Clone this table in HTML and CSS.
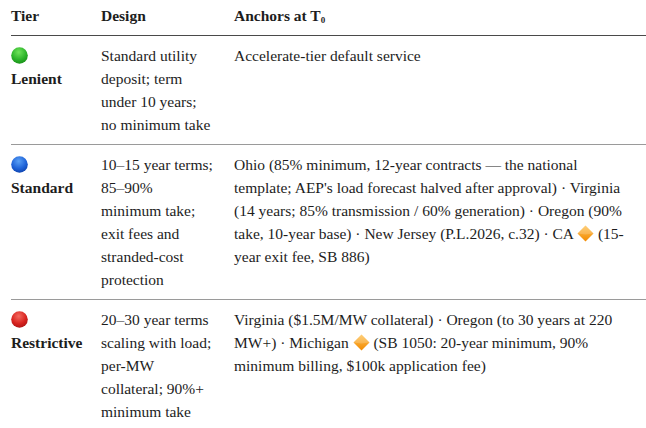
FILE: index.html
```html
<!DOCTYPE html>
<html lang="en">
<head>
<meta charset="utf-8">
<title>Tiers</title>
<link rel="stylesheet" href="styles.css">
</head>
<body>
<svg class="defs" width="0" height="0" aria-hidden="true">
  <defs>
    <radialGradient id="gGreen" cx="0.45" cy="0.3" r="0.75">
      <stop offset="0" stop-color="#6fe35a"/>
      <stop offset="0.6" stop-color="#2cb42a"/>
      <stop offset="1" stop-color="#178a17"/>
    </radialGradient>
    <radialGradient id="gBlue" cx="0.45" cy="0.3" r="0.75">
      <stop offset="0" stop-color="#5aa0f5"/>
      <stop offset="0.6" stop-color="#1f63d8"/>
      <stop offset="1" stop-color="#0c3fa8"/>
    </radialGradient>
    <radialGradient id="gRed" cx="0.45" cy="0.3" r="0.75">
      <stop offset="0" stop-color="#f46a60"/>
      <stop offset="0.6" stop-color="#d8231f"/>
      <stop offset="1" stop-color="#a81414"/>
    </radialGradient>
    <linearGradient id="gOrange" x1="0" y1="0" x2="0" y2="1">
      <stop offset="0" stop-color="#ffc45a"/>
      <stop offset="1" stop-color="#f28a00"/>
    </linearGradient>
  </defs>
</svg>
<table class="tiers">
  <colgroup>
    <col class="w1">
    <col class="w2">
    <col class="w3">
  </colgroup>
  <thead>
    <tr>
      <th class="c1">Tier</th>
      <th class="c2">Design</th>
      <th class="c3">Anchors at T<sub>0</sub></th>
    </tr>
  </thead>
  <tbody>
    <tr>
      <td class="c1">
        <svg class="dot" viewBox="0 0 17 17"><circle cx="8.5" cy="8.5" r="8.3" fill="url(#gGreen)"/></svg><br>
        <strong>Lenient</strong>
      </td>
      <td class="c2">Standard utility deposit; term under 10 years; no minimum take</td>
      <td class="c3">Accelerate-tier default service</td>
    </tr>
    <tr>
      <td class="c1">
        <svg class="dot" viewBox="0 0 17 17"><circle cx="8.5" cy="8.5" r="8.3" fill="url(#gBlue)"/></svg><br>
        <strong>Standard</strong>
      </td>
      <td class="c2">10–15 year terms; 85–90% minimum take; exit fees and stranded-cost protection</td>
      <td class="c3">Ohio (85% minimum, 12-year contracts — the national template; AEP's load forecast halved after approval) · Virginia (14 years; 85% transmission / 60% generation) · Oregon (90% take, 10-year base) · New Jersey (P.L.2026, c.32) · CA <svg class="diamond" viewBox="0 0 17 17"><path d="M8.5 0.5 L16.5 8.5 L8.5 16.5 L0.5 8.5 Z" fill="url(#gOrange)"/><path d="M8.5 0.5 L16.5 8.5 L8.5 9.5 L0.5 8.5 Z" fill="#ffffff" opacity="0.18"/></svg> (15-year exit fee, SB 886)</td>
    </tr>
    <tr>
      <td class="c1">
        <svg class="dot" viewBox="0 0 17 17"><circle cx="8.5" cy="8.5" r="8.3" fill="url(#gRed)"/></svg><br>
        <strong>Restrictive</strong>
      </td>
      <td class="c2">20–30 year terms scaling with load; per-MW collateral; 90%+ minimum take</td>
      <td class="c3">Virginia ($1.5M/MW collateral) · Oregon (to 30 years at 220 MW+) · Michigan <svg class="diamond" viewBox="0 0 17 17"><path d="M8.5 0.5 L16.5 8.5 L8.5 16.5 L0.5 8.5 Z" fill="url(#gOrange)"/><path d="M8.5 0.5 L16.5 8.5 L8.5 9.5 L0.5 8.5 Z" fill="#ffffff" opacity="0.18"/></svg> (SB 1050: 20-year minimum, 90% minimum billing, $100k application fee)</td>
    </tr>
  </tbody>
</table>
</body>
</html>
```
FILE: styles.css
```css
html, body {
  margin: 0;
  padding: 0;
  background: #ffffff;
}

body {
  padding-left: 11px;
  font-family: "Liberation Serif", "Times New Roman", serif;
  font-size: 15.5px;
  line-height: 23px;
  color: #1d1d1d;
}

.defs {
  position: absolute;
  width: 0;
  height: 0;
}

.tiers {
  border-collapse: collapse;
  width: 635px;
  table-layout: fixed;
}

.w1 { width: 90px; }
.w2 { width: 133px; }
.w3 { width: 412px; }

.tiers th,
.tiers td {
  box-sizing: border-box;
  text-align: left;
  vertical-align: top;
  padding: 8px 0 8px 0;
}

.tiers .c2 { padding-right: 20px; }
.tiers .c3 { padding-right: 14px; }

.tiers th {
  font-weight: 700;
  padding-top: 4px;
  border-bottom: 1px solid #4a4a4a;
}

.tiers tbody tr + tr td {
  border-top: 1px solid #9a9a9a;
}

.tiers sub {
  font-size: 9px;
  line-height: 0;
  vertical-align: -2px;
}

strong {
  font-weight: 700;
}

.dot {
  width: 17px;
  height: 17px;
  vertical-align: -3px;
}

.diamond {
  width: 17px;
  height: 17px;
  vertical-align: -3px;
}
```
